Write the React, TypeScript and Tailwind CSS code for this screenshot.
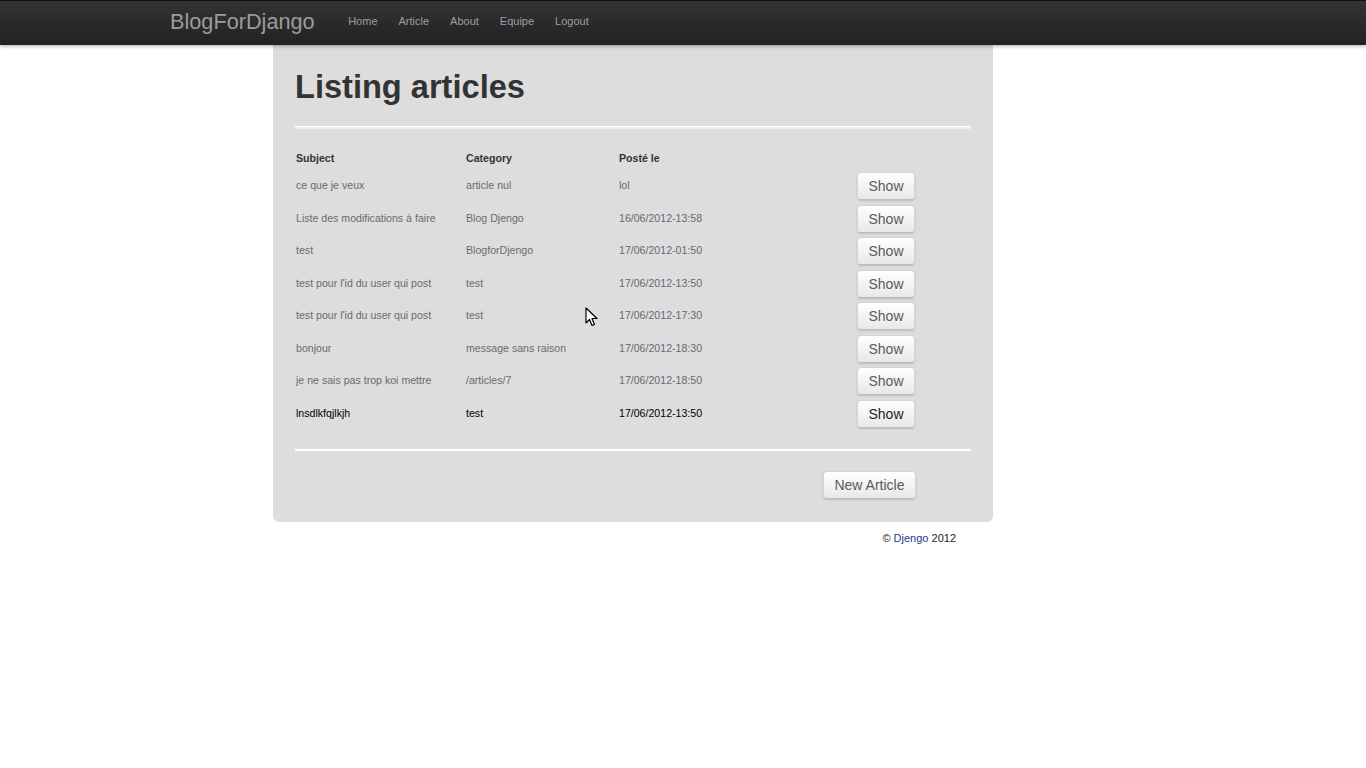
const navLinks = ["Home", "Article", "About", "Equipe", "Logout"];

const articles = [
  { subject: "ce que je veux", category: "article nul", date: "lol" },
  { subject: "Liste des modifications à faire", category: "Blog Djengo", date: "16/06/2012-13:58" },
  { subject: "test", category: "BlogforDjengo", date: "17/06/2012-01:50" },
  { subject: "test pour l'id du user qui post", category: "test", date: "17/06/2012-13:50" },
  { subject: "test pour l'id du user qui post", category: "test", date: "17/06/2012-17:30" },
  { subject: "bonjour", category: "message sans raison", date: "17/06/2012-18:30" },
  { subject: "je ne sais pas trop koi mettre", category: "/articles/7", date: "17/06/2012-18:50" },
  { subject: "lnsdlkfqjlkjh", category: "test", date: "17/06/2012-13:50", active: true },
];

function Button({ children, dark }: { children: React.ReactNode; dark?: boolean }) {
  return (
    <button
      className={
        "h-[28px] px-[10.5px] rounded-[4px] border border-[#d4d4d4] border-b-[#bcbcbc] bg-gradient-to-b from-white to-[#e8e8e8] shadow-[0_1px_2px_rgba(0,0,0,0.15)] text-[14px] leading-none " +
        (dark ? "text-[#222]" : "text-[#5a5a5a]")
      }
    >
      {children}
    </button>
  );
}

function Cursor() {
  return (
    <svg className="absolute left-[585px] top-[307px]" width="13" height="21" viewBox="0 0 13 21">
      <path d="M1 1 L1 16 L4.5 12.5 L7 18.5 L9.5 17.5 L7 11.5 L12 11.5 Z" fill="#fff" stroke="#000" strokeWidth="1.2" strokeLinejoin="round" />
    </svg>
  );
}

export default function App() {
  return (
    <div className="relative min-h-[768px] bg-white font-['Liberation_Sans',Arial,sans-serif]">
      <div className="h-[45px] bg-gradient-to-b from-[#333] to-[#222] border-t border-[#111] shadow-[0_1px_4px_rgba(0,0,0,0.35)] relative z-10">
        <div className="w-[1026px] mx-auto flex items-center h-full">
          <span className="text-[21.7px] text-[#9b9b9b] leading-none -mt-[3px]">BlogForDjango</span>
          <nav className="flex ml-[23px] -mt-[3px]">
            {navLinks.map((l) => (
              <a key={l} className="px-[10.5px] text-[11px] text-[#999ea6]">
                {l}
              </a>
            ))}
          </nav>
        </div>
      </div>

      <div className="w-[1026px] mx-auto">
        <div className="ml-[103px] w-[720px] bg-[#dddddd] rounded-b-[6px] px-[22px] pt-[22px] pb-[23px]">
          <h1 className="text-[32.6px] font-bold text-[#333] leading-[40px]">Listing articles</h1>
          <div className="mt-[19px] border-t border-white border-b-2 border-b-[#eee] h-[1px] mb-[21px]" />
          <table className="w-full text-[10.6px] border-collapse table-fixed">
            <thead>
              <tr className="h-[20px]">
                <th className="w-[171px] text-left font-bold text-[#333] pl-[1px] align-top pt-[1px]">Subject</th>
                <th className="w-[153px] text-left font-bold text-[#333] align-top pt-[1px]">Category</th>
                <th className="w-[238px] text-left font-bold text-[#333] align-top pt-[1px]">Posté le</th>
                <th></th>
              </tr>
            </thead>
            <tbody>
              {articles.map((a, i) => (
                <tr key={i} className="h-[32.5px]">
                  <td className={"pl-[1px] " + (a.active ? "text-black" : "text-[#6b6b6b]")}>{a.subject}</td>
                  <td className={a.active ? "text-black" : "text-[#6b6b6b]"}>{a.category}</td>
                  <td className={a.active ? "text-black" : "text-[#636a74]"}>{a.date}</td>
                  <td>
                    <Button dark={a.active}>Show</Button>
                  </td>
                </tr>
              ))}
            </tbody>
          </table>
          <div className="mt-[19px] border-t-2 border-white h-[1px]" />
          <div className="flex justify-end pr-[55px] mt-[20px]">
            <Button>New Article</Button>
          </div>
        </div>
        <div className="ml-[103px] w-[720px] flex justify-end pr-[37px] pt-[8px] text-[11px] text-[#222]">
          <span>
            © <a className="text-[#1a3e8a]">Djengo</a> 2012
          </span>
        </div>
      </div>
      <Cursor />
    </div>
  );
}
